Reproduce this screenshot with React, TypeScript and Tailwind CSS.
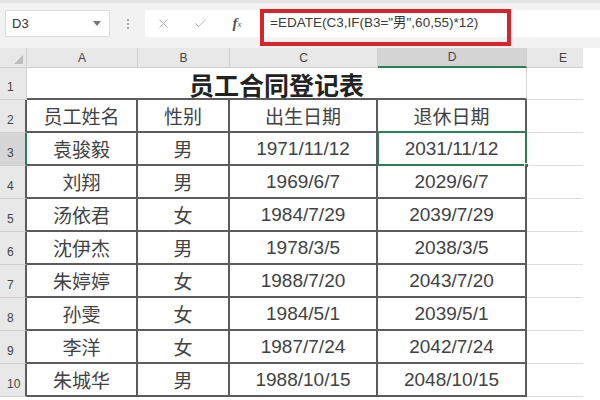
import React from "react";
import { X, Check } from "lucide-react";

const GRID = "grid grid-cols-[27px_111px_92px_148px_149px_56px_17px]";

const rows: [string, string, string, string][] = [
  ["袁骏毅", "男", "1971/11/12", "2031/11/12"],
  ["刘翔", "男", "1969/6/7", "2029/6/7"],
  ["汤依君", "女", "1984/7/29", "2039/7/29"],
  ["沈伊杰", "男", "1978/3/5", "2038/3/5"],
  ["朱婷婷", "女", "1988/7/20", "2043/7/20"],
  ["孙雯", "女", "1984/5/1", "2039/5/1"],
  ["李洋", "女", "1987/7/24", "2042/7/24"],
  ["朱城华", "男", "1988/10/15", "2048/10/15"],
];

const cjk = { fontFamily: '"Noto Sans CJK SC", "Noto Sans", sans-serif' };
const num = { fontFamily: '"Liberation Sans", Arial, sans-serif' };

function Cell({ children, isNum, selected }: { children: React.ReactNode; isNum?: boolean; selected?: boolean }) {
  return (
    <div
      className="relative flex items-center justify-center border-r-2 border-b-2 border-[#5c5c5c] text-[19px] text-[#424242] leading-none"
      style={isNum ? num : cjk}
    >
      {children}
      {selected && (
        <>
          <div className="absolute -left-[1px] -top-[2px] -right-[2px] -bottom-[2px] border-2 border-[#2e7d55]" />
          <div className="absolute -right-[4px] -bottom-[4px] w-[5px] h-[5px] bg-[#2e7d55] border border-white" />
        </>
      )}
    </div>
  );
}

function RowHead({ n, table, active }: { n: number; table?: boolean; active?: boolean }) {
  return (
    <div
      className={`flex items-end pl-[7px] pb-[3px] text-[12px] text-[#444] border-b border-[#cfcfcf] ${
        active ? "bg-[#d6d6d6] border-r-2 border-r-[#2e7d55]" : table ? "bg-[#e8e8e8] border-r-2 border-r-[#5c5c5c]" : "bg-[#e8e8e8] border-r border-r-[#cfcfcf]"
      }`}
      style={num}
    >
      {n}
    </div>
  );
}

export default function App() {
  return (
    <div className="w-[600px] h-[400px] overflow-hidden bg-white relative">
      {/* toolbar */}
      <div className="h-[48px] bg-[#f2f2f2] border-t-[3px] border-[#e4e4e4] flex items-start pt-[7px]">
        <div className="ml-[5px] w-[105px] h-[27px] bg-white border border-[#dddddd] flex items-center justify-between pl-[6px] pr-[8px]">
          <span className="text-[13px] text-[#333]" style={num}>D3</span>
          <svg width="8" height="5" viewBox="0 0 8 5"><path d="M0 0 L8 0 L4 5 Z" fill="#777" /></svg>
        </div>
        <div className="w-[35px] h-[27px] flex flex-col items-center justify-center gap-[2px]">
          <div className="w-[2px] h-[2px] bg-[#aaa]" />
          <div className="w-[2px] h-[2px] bg-[#aaa]" />
          <div className="w-[2px] h-[2px] bg-[#aaa]" />
        </div>
        <div className="flex-1 h-[27px] bg-white flex items-center">
          <div className="w-[36px] flex justify-center">
            <X size={15} strokeWidth={1.3} color="#a8a8a8" />
          </div>
          <div className="w-[38px] flex justify-center">
            <Check size={15} strokeWidth={1.3} color="#a8a8a8" />
          </div>
          <div className="w-[36px] flex justify-center text-[#555]" style={{ fontFamily: '"Liberation Serif", serif' }}>
            <span className="italic text-[15px] font-bold">f</span>
            <span className="italic text-[9px] mt-[6px]">x</span>
          </div>
          <span className="ml-[15px] text-[13.5px] text-[#3a3a3a] whitespace-nowrap" style={{ fontFamily: '"Liberation Sans", "Noto Sans CJK SC", sans-serif' }}>
            =EDATE(C3,IF(B3="男",60,55)*12)
          </span>
        </div>
      </div>
      <div className="absolute left-[260px] top-[9px] w-[251px] h-[37px] border-[4px] border-[#d7252c]" />

      {/* column headers */}
      <div className={`${GRID} h-[20px] text-[12px] text-[#444]`} style={num}>
        <div className="relative bg-[#e8e8e8] border-r border-b border-[#cfcfcf]">
          <svg className="absolute right-[3px] bottom-[3px]" width="9" height="9" viewBox="0 0 9 9"><path d="M9 0 L9 9 L0 9 Z" fill="#bcbcbc" /></svg>
        </div>
        {["A", "B", "C"].map((c) => (
          <div key={c} className="bg-[#e8e8e8] border-r border-b border-[#cfcfcf] flex items-center justify-center">{c}</div>
        ))}
        <div className="bg-[#d4d4d4] border-r border-[#cfcfcf] border-b-2 border-b-[#2e7d55] flex items-center justify-center">D</div>
        <div className="bg-[#e8e8e8] border-b border-[#cfcfcf] flex items-center justify-center pl-[16px]">E</div>
        <div className="bg-white" />
      </div>

      {/* row 1 */}
      <div className={`${GRID} h-[32px]`}>
        <RowHead n={1} />
        <div className="col-span-4 flex items-center justify-center border-b-2 border-[#5c5c5c] border-r border-r-[#d4d4d4] text-[25px] font-bold text-[#222] leading-none pt-[2px]" style={cjk}>
          员工合同登记表
        </div>
        <div className="border-b border-[#dcdcdc]" />
        <div />
      </div>

      {/* row 2 */}
      <div className={`${GRID} h-[33px]`}>
        <RowHead n={2} table />
        <Cell>员工姓名</Cell>
        <Cell>性别</Cell>
        <Cell>出生日期</Cell>
        <Cell>退休日期</Cell>
        <div className="border-b border-[#dcdcdc]" />
        <div />
      </div>

      {rows.map((r, i) => (
        <div key={i} className={`${GRID} h-[33px]`}>
          <RowHead n={i + 3} table active={i === 0} />
          <Cell>{r[0]}</Cell>
          <Cell>{r[1]}</Cell>
          <Cell isNum>{r[2]}</Cell>
          <Cell isNum selected={i === 0}>{r[3]}</Cell>
          <div className="border-b border-[#dcdcdc]" />
          <div />
        </div>
      ))}
    </div>
  );
}
